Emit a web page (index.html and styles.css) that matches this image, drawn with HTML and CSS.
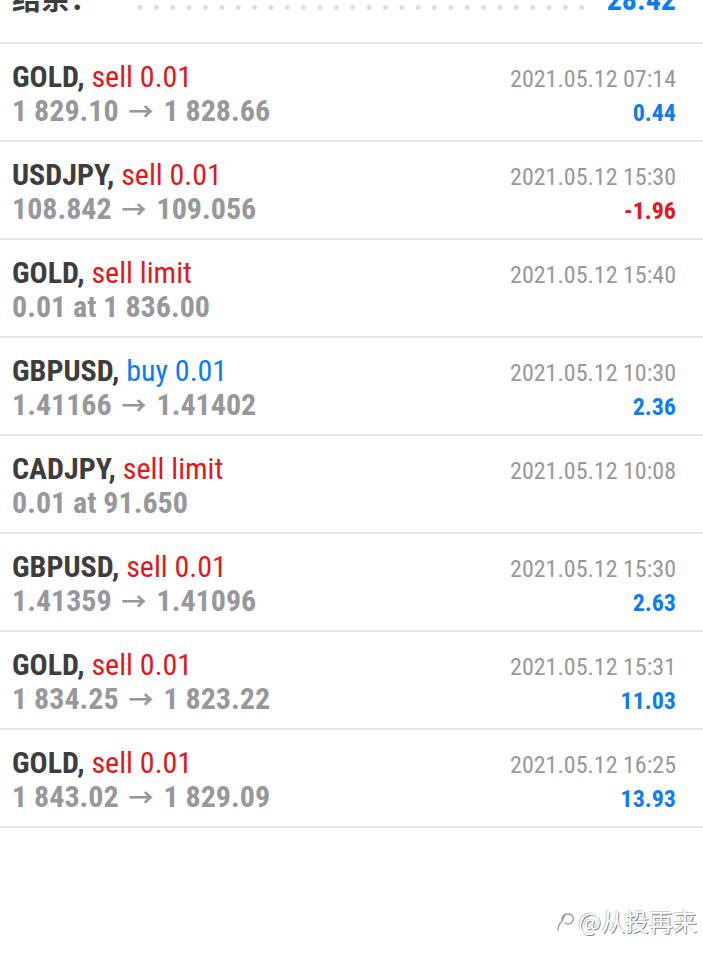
FILE: index.html
```html
<!DOCTYPE html>
<html lang="zh-CN">
<head>
  <meta charset="UTF-8" />
  <meta name="viewport" content="width=device-width, initial-scale=1.0" />
  <title>历史</title>
  <link rel="stylesheet" href="styles.css">
</head>
<body>
  <!-- 结余 -->
  <div class="summary">
    <span class="summary-label">结余：</span>
    <span class="summary-dots"></span>
    <span class="summary-value">28.42</span>
  </div>

  <!-- 交易列表 -->
  <ul class="deal-list">
    <li class="deal">
      <div class="deal-main">
        <div class="deal-title"><b>GOLD,</b> <span class="sell">sell 0.01</span></div>
        <div class="deal-price">1 829.10 <span class="arrow">→</span> 1 828.66</div>
      </div>
      <div class="deal-side">
        <div class="deal-time">2021.05.12 07:14</div>
        <div class="deal-profit">0.44</div>
      </div>
    </li>
    <li class="deal">
      <div class="deal-main">
        <div class="deal-title"><b>USDJPY,</b> <span class="sell">sell 0.01</span></div>
        <div class="deal-price">108.842 <span class="arrow">→</span> 109.056</div>
      </div>
      <div class="deal-side">
        <div class="deal-time">2021.05.12 15:30</div>
        <div class="deal-profit loss">-1.96</div>
      </div>
    </li>
    <li class="deal">
      <div class="deal-main">
        <div class="deal-title"><b>GOLD,</b> <span class="sell">sell limit</span></div>
        <div class="deal-price">0.01 at 1 836.00</div>
      </div>
      <div class="deal-side">
        <div class="deal-time">2021.05.12 15:40</div>
        <div class="deal-profit"></div>
      </div>
    </li>
    <li class="deal">
      <div class="deal-main">
        <div class="deal-title"><b>GBPUSD,</b> <span class="buy">buy 0.01</span></div>
        <div class="deal-price">1.41166 <span class="arrow">→</span> 1.41402</div>
      </div>
      <div class="deal-side">
        <div class="deal-time">2021.05.12 10:30</div>
        <div class="deal-profit">2.36</div>
      </div>
    </li>
    <li class="deal">
      <div class="deal-main">
        <div class="deal-title"><b>CADJPY,</b> <span class="sell">sell limit</span></div>
        <div class="deal-price">0.01 at 91.650</div>
      </div>
      <div class="deal-side">
        <div class="deal-time">2021.05.12 10:08</div>
        <div class="deal-profit"></div>
      </div>
    </li>
    <li class="deal">
      <div class="deal-main">
        <div class="deal-title"><b>GBPUSD,</b> <span class="sell">sell 0.01</span></div>
        <div class="deal-price">1.41359 <span class="arrow">→</span> 1.41096</div>
      </div>
      <div class="deal-side">
        <div class="deal-time">2021.05.12 15:30</div>
        <div class="deal-profit">2.63</div>
      </div>
    </li>
    <li class="deal">
      <div class="deal-main">
        <div class="deal-title"><b>GOLD,</b> <span class="sell">sell 0.01</span></div>
        <div class="deal-price">1 834.25 <span class="arrow">→</span> 1 823.22</div>
      </div>
      <div class="deal-side">
        <div class="deal-time">2021.05.12 15:31</div>
        <div class="deal-profit">11.03</div>
      </div>
    </li>
    <li class="deal">
      <div class="deal-main">
        <div class="deal-title"><b>GOLD,</b> <span class="sell">sell 0.01</span></div>
        <div class="deal-price">1 843.02 <span class="arrow">→</span> 1 829.09</div>
      </div>
      <div class="deal-side">
        <div class="deal-time">2021.05.12 16:25</div>
        <div class="deal-profit">13.93</div>
      </div>
    </li>
  </ul>

  <!-- 水印 -->
  <div class="watermark">
    <svg class="wm-icon" width="20" height="22" viewBox="0 0 20 22">
      <path d="M2 20 C2 16 4 13 6 11 C5 7 8 4 12 4 C16 4 18 7 17 10 C16 14 12 15 9 13 M6 11 C7 9 8 7 9 5" fill="none" stroke="#9a9a9a" stroke-width="1.3" stroke-linecap="round"/>
    </svg>
    <span class="wm-text">@从投再来</span>
  </div>
</body>
</html>
```

FILE: styles.css
```css
body {
  margin: 0;
  background: #fff;
  color: #3d3d3d;
  font-family: "Roboto Condensed", Roboto, "Noto Sans CJK SC", sans-serif;
  overflow: hidden;
}

/* ==== 结余 ==== */
.summary {
  display: flex;
  align-items: baseline;
  margin-top: -20px;
  padding: 0 27px 25px 12px;
  line-height: 34px;
  font-size: 30px;
  font-weight: bold;
  border-bottom: 2px solid #e3e3e3;
}
.summary-label {
  font-family: "Noto Sans CJK SC", sans-serif;
  font-size: 29px;
}
.summary-dots {
  flex: 1;
  height: 5px;
  margin: 0 17px 3px 33px;
  background: radial-gradient(circle, #dcdcdc 2px, transparent 2.6px) 0 0 / 16px 5px;
  background-repeat: space no-repeat;
}
.summary-value {
  color: #0a7cf4;
}

/* ==== 列表 ==== */
.deal-list {
  list-style: none;
  margin: 0;
  padding: 0;
}
.deal {
  display: flex;
  justify-content: space-between;
  padding: 16px 27px 12px 12px;
  border-bottom: 2px solid #e3e3e3;
  line-height: 34px;
}
.deal-title {
  height: 34px;
  font-size: 30px;
  color: #e3161d;
}
.deal-title b {
  color: #3d3d3d;
}
.deal-title .buy {
  color: #0a7cf4;
}
.deal-price {
  height: 34px;
  font-size: 30px;
  font-weight: bold;
  color: #98989c;
}
.deal-price .arrow {
  margin: 0 3px;
  font-size: 25px;
  line-height: 0;
}
.deal-side {
  padding-top: 2px;
  text-align: right;
  font-size: 24px;
}
.deal-time {
  height: 34px;
  color: #98989c;
}
.deal-profit {
  height: 32px;
  font-weight: bold;
  color: #0a7cf4;
}
.deal-profit.loss {
  color: #e3161d;
}

/* ==== 水印 ==== */
.watermark {
  display: flex;
  justify-content: flex-end;
  align-items: center;
  gap: 2px;
  padding: 75px 6px 0 0;
}
.wm-text {
  font-family: "Noto Sans CJK SC", sans-serif;
  font-size: 24px;
  color: #fff;
  text-shadow: 1px 1px 0 #8a8a8a, -1px -1px 0 #d0d0d0;
}
```
